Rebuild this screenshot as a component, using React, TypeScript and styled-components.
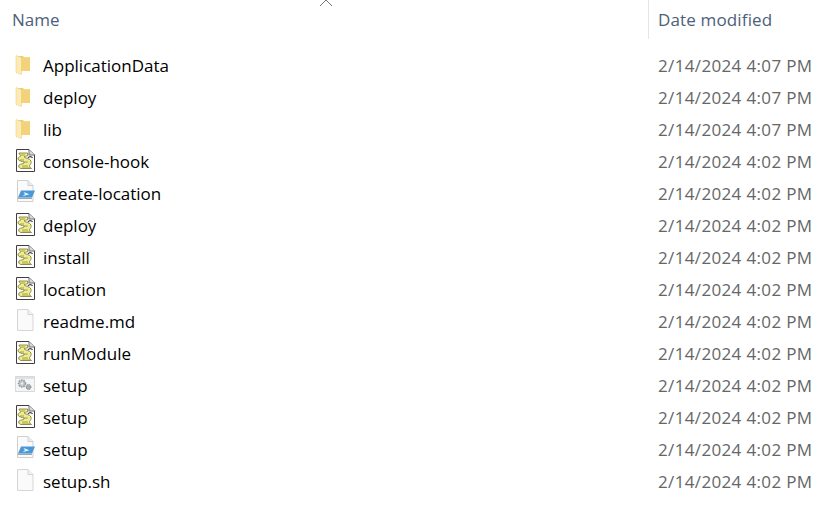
import React from 'react';
import styled, { createGlobalStyle } from 'styled-components';

const GlobalStyle = createGlobalStyle`
  html, body {
    margin: 0;
    padding: 0;
    background: #fff;
    overflow: hidden;
  }
`;

const Wrapper = styled.div`
  width: 834px;
  height: 505px;
  font-family: 'Open Sans', 'Noto Sans', sans-serif;
  font-size: 17px;
  overflow: hidden;
`;

const Header = styled.div`
  position: relative;
  display: flex;
  height: 39px;
  color: #4c607a;
`;

const SortArrow = styled.svg`
  position: absolute;
  left: 319px;
  top: 0;
`;

const NameHead = styled.div`
  width: 648px;
  padding: 8px 0 0 12px;
  box-sizing: border-box;
  line-height: 24px;
`;

const DateHead = styled.div`
  flex: 1;
  border-left: 1px solid #e5e5e5;
  padding: 8px 0 0 9px;
  line-height: 24px;
  letter-spacing: 0.15px;
`;

const List = styled.div`
  display: flex;
  flex-direction: column;
  padding-top: 10px;
`;

const Row = styled.div`
  display: flex;
  align-items: center;
  height: 32px;
`;

const NameCell = styled.div`
  display: flex;
  align-items: center;
  gap: 6px;
  width: 658px;
  padding-left: 15px;
  box-sizing: border-box;
  color: #000;
`;

const DateCell = styled.div`
  color: #666;
  white-space: nowrap;
  letter-spacing: 0.35px;
`;

const IconBox = styled.svg`
  flex: none;
  display: block;
`;

const FolderIcon = () => (
  <IconBox width="22" height="26" viewBox="0 1 22 26">
    <path d="M2 5h6l1 1.500h6V20H6z" fill="#f0c963" />
    <path d="M7 6.500h8V20H7z" fill="#f4d27a" />
    <path d="M1 4.500l5.500 2v17L1 21.500z" fill="#fcecb4" />
    <path d="M1 4.500l5.500 2v17L1 21.500z" fill="none" stroke="#eccb78" strokeWidth="0.5" />
  </IconBox>
);

const ScriptIcon = () => (
  <IconBox width="22" height="26" viewBox="0 1 22 26">
    <path d="M1.500 2.500h12.500l5.500 5.500v16.500h-18z" fill="#fff" stroke="#3f3f3f" />
    <path d="M14 2.500v5.500h5.500" fill="#dcdcdc" stroke="#6f6f6f" />
    <path
      d="M4 6h8.500l.5 2.500c-1.500 1-3.500.5-4 1.500 1 1.200 6 1.500 7 4 .5 2-.5 3.500-1.500 4.500.2 1.500 1 2.200 2 3H6c-2-.5-3-2-2-3.500 1.500-1.500 5-.8 5.500-2.500-1.500-1.500-6-1-6.500-3.500-.3-2 2.500-2.500 3-3.500C5 8 4 7.200 4 6z"
      fill="#efec8a"
      stroke="#76733a"
      strokeWidth="0.8"
    />
    <path d="M6 8h4M5 13h4M8 15h5M7 19h6M7 21h8" stroke="#8d8a45" strokeWidth="0.8" />
    <path d="M13 11c1-1.800 3.500-1.800 4.500 0" fill="none" stroke="#4a4a4a" strokeWidth="1.300" />
  </IconBox>
);

const ShortcutIcon = () => (
  <IconBox width="22" height="26" viewBox="0 1 22 26">
    <path d="M2.500 1.500h10.500l5 5v16h-15.500z" fill="#fbfbfb" stroke="#cfcfcf" />
    <path d="M13 1.500v5h5" fill="#ececec" stroke="#cfcfcf" />
    <path d="M6 11.500h14l-3 7H3z" fill="#4a98d8" />
    <path d="M8.500 13l6 2.200-7 2 2.500-2z" fill="#e8f6ff" />
    <path d="M3 18.500h14v1.500H3z" fill="#93a8ba" />
  </IconBox>
);

const BlankIcon = () => (
  <IconBox width="22" height="26" viewBox="0 1 22 26">
    <path d="M2.500 2.500h10.500l5 5v16H2.500z" fill="#fafafa" stroke="#d6d6d6" />
    <path d="M13 2.500v5h5" fill="#f0f0f0" stroke="#d6d6d6" />
  </IconBox>
);

const GearsIcon = () => (
  <IconBox width="22" height="26" viewBox="0 1 22 26">
    <path d="M.5 5.500h19v15H.5z" fill="#f5f5f5" stroke="#d8d8d8" />
    <path d="M1 6h18v2H1z" fill="#dde2e8" />
    <circle cx="7" cy="12.500" r="3.500" fill="#c0c4c8" stroke="#94989c" strokeWidth="1.500" strokeDasharray="1.500 1" />
    <circle cx="7" cy="12.500" r="1.200" fill="#eee" />
    <circle cx="13.500" cy="16" r="2.500" fill="#a9adb1" stroke="#8b8f93" strokeDasharray="1.200 0.800" />
  </IconBox>
);

const icons = {
  folder: FolderIcon,
  script: ScriptIcon,
  shortcut: ShortcutIcon,
  blank: BlankIcon,
  gears: GearsIcon,
};

type FileKind = keyof typeof icons;

const OLD = '2/14/2024 4:07 PM';
const NEW = '2/14/2024 4:02 PM';

const files: { name: string; kind: FileKind; date: string }[] = [
  { name: 'ApplicationData', kind: 'folder', date: OLD },
  { name: 'deploy', kind: 'folder', date: OLD },
  { name: 'lib', kind: 'folder', date: OLD },
  { name: 'console-hook', kind: 'script', date: NEW },
  { name: 'create-location', kind: 'shortcut', date: NEW },
  { name: 'deploy', kind: 'script', date: NEW },
  { name: 'install', kind: 'script', date: NEW },
  { name: 'location', kind: 'script', date: NEW },
  { name: 'readme.md', kind: 'blank', date: NEW },
  { name: 'runModule', kind: 'script', date: NEW },
  { name: 'setup', kind: 'gears', date: NEW },
  { name: 'setup', kind: 'script', date: NEW },
  { name: 'setup', kind: 'shortcut', date: NEW },
  { name: 'setup.sh', kind: 'blank', date: NEW },
];

const App = () => {
  return (
    <Wrapper>
      <GlobalStyle />
      <Header>
        <NameHead>Name</NameHead>
        <SortArrow width="14" height="7" viewBox="0 0 14 7">
          <path d="M1 6l6-6 6 6" fill="none" stroke="#777" strokeWidth="1" />
        </SortArrow>
        <DateHead>Date modified</DateHead>
      </Header>
      <List>
        {files.map((file, i) => {
          const Icon = icons[file.kind];
          return (
            <Row key={i}>
              <NameCell>
                <Icon />
                {file.name}
              </NameCell>
              <DateCell>{file.date}</DateCell>
            </Row>
          );
        })}
      </List>
    </Wrapper>
  );
};

export default App;
